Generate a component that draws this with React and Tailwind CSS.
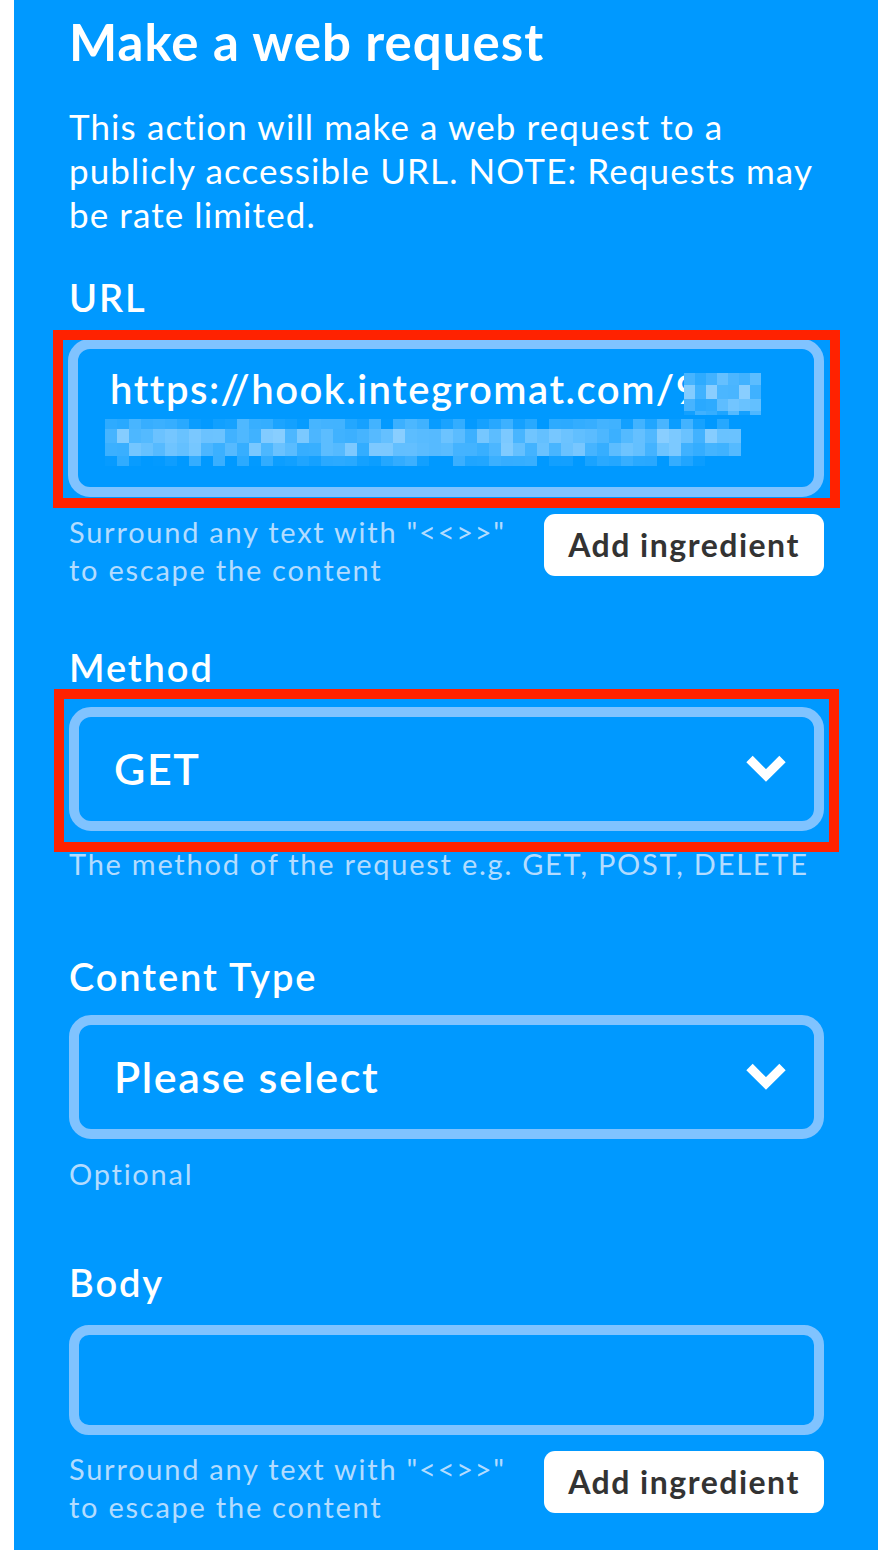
import React from "react";

function seeded(seed) {
  let s = seed;
  return () => {
    s = (s * 1103515245 + 12345) % 2147483648;
    return s / 2147483648;
  };
}

function mix(t) {
  const a = [0, 153, 255];
  const b = [178, 222, 255];
  const c = a.map((v, i) => Math.round(v + (b[i] - v) * t));
  return `rgb(${c[0]},${c[1]},${c[2]})`;
}

function Pixels({ cols, rows, bw, seed, rowStrength }) {
  const rnd = seeded(seed);
  const rects = [];
  for (let r = 0; r < rows.length; r++) {
    for (let c = 0; c < cols; c++) {
      const base = rowStrength[r];
      const t = Math.max(0, Math.min(1, base + (rnd() - 0.5) * 0.45));
      rects.push(
        <rect key={`${r}-${c}`} x={c * bw} y={rows[r][0]} width={bw} height={rows[r][1]} fill={mix(t)} />
      );
    }
  }
  const h = rows[rows.length - 1][0] + rows[rows.length - 1][1];
  return (
    <svg width={cols * bw} height={h} viewBox={`0 0 ${cols * bw} ${h}`} className="block" shapeRendering="crispEdges">
      {rects}
    </svg>
  );
}

function Chevron() {
  return (
    <svg width="42" height="30" viewBox="0 0 42 30" className="block">
      <polyline points="4.5,5 21,21.5 37.5,5" fill="none" stroke="white" strokeWidth="9" strokeLinecap="butt" strokeLinejoin="miter" />
    </svg>
  );
}

function Helper({ children, className = "" }) {
  return <div className={`text-[29px] leading-[38px] tracking-[1.75px] text-[#b3dcff] ${className}`}>{children}</div>;
}

function Label({ children, className = "" }) {
  return <div className={`text-[38px] leading-[44px] font-semibold tracking-[1.9px] text-white ${className}`}>{children}</div>;
}

function IngredientRow({ className = "" }) {
  return (
    <div className={`flex justify-between items-start ${className}`}>
      <Helper className="-mt-px">
        Surround any text with "&lt;&lt;&gt;&gt;"
        <br />
        to escape the content
      </Helper>
      <button className="w-[280px] h-[62px] rounded-[11px] bg-white text-[#333333] text-[32px] tracking-[1.5px] font-bold flex items-center justify-center">
        Add ingredient
      </button>
    </div>
  );
}

function Select({ value, className = "", children }) {
  return (
    <div className={`relative h-[124px] rounded-[22px] border-[10px] border-[#80c3ff] flex items-center justify-between pl-[35px] pr-[27px] ${className}`}>
      <span className="text-[43px] leading-[50px] font-semibold tracking-[1.6px] text-white">{value}</span>
      <Chevron />
      {children}
    </div>
  );
}

export default function App() {
  return (
    <div className="flex w-[896px] min-h-[1550px] bg-white font-['Lato','Noto_Sans',sans-serif]">
      <div className="w-[14px] shrink-0" />
      <div className="w-[864px] shrink-0 bg-[#0099ff] pl-[55px] pr-[54px] pt-[14px] pb-[20px]">
        <h1 className="text-[51px] leading-[56px] font-bold tracking-[1px] text-white">Make a web request</h1>
        <p className="mt-[34px] text-[35px] leading-[44px] tracking-[1.1px] text-white whitespace-nowrap">
          This action will make a web request to a
          <br />
          publicly accessible URL. NOTE: Requests may
          <br />
          be rate limited.
        </p>

        <Label className="mt-[39px]">URL</Label>
        <div className="relative mt-[20px] -ml-px h-[158px] rounded-[22px] border-[10px] border-[#80c3ff] pl-[32px] pt-[16px]">
          <div className="flex items-start">
            <span className="text-[40px] leading-[48px] font-semibold tracking-[1.5px] text-white whitespace-nowrap">
              https://hook.integromat.com/9
            </span>
            <div className="mt-[8px] -ml-[16px]">
              <Pixels
                cols={7}
                bw={11}
                seed={7}
                rows={[[0, 12], [12, 14], [26, 12], [38, 4]]}
                rowStrength={[0.35, 0.55, 0.45, 0.3]}
              />
            </div>
          </div>
          <div className="-ml-[5px] mt-[4px]">
            <Pixels
              cols={53}
              bw={12}
              seed={42}
              rows={[[0, 10], [10, 14], [24, 13], [37, 10]]}
              rowStrength={[0.22, 0.55, 0.5, 0.15]}
            />
          </div>
          <div className="pointer-events-none absolute -left-[25px] -right-[26px] -top-[19px] -bottom-[21px] border-[10px] border-[#ff2200]" />
        </div>
        <IngredientRow className="mt-[17px]" />

        <Label className="mt-[56px]">Method</Label>
        <Select value="GET" className="mt-[18px]">
          <div className="pointer-events-none absolute -left-[25px] -right-[25px] -top-[28px] -bottom-[31px] border-[10px] border-[#ff2200]" />
        </Select>
        <Helper className="mt-[14px] whitespace-nowrap">The method of the request e.g. GET, POST, DELETE</Helper>

        <Label className="mt-[71px]">Content Type</Label>
        <Select value="Please select" className="mt-[17px]" />
        <Helper className="mt-[16px]">Optional</Helper>

        <Label className="mt-[67px]">Body</Label>
        <div className="mt-[21px] h-[110px] rounded-[20px] border-[10px] border-[#80c3ff]" />
        <IngredientRow className="mt-[16px]" />
      </div>
      <div className="flex-1" />
    </div>
  );
}
